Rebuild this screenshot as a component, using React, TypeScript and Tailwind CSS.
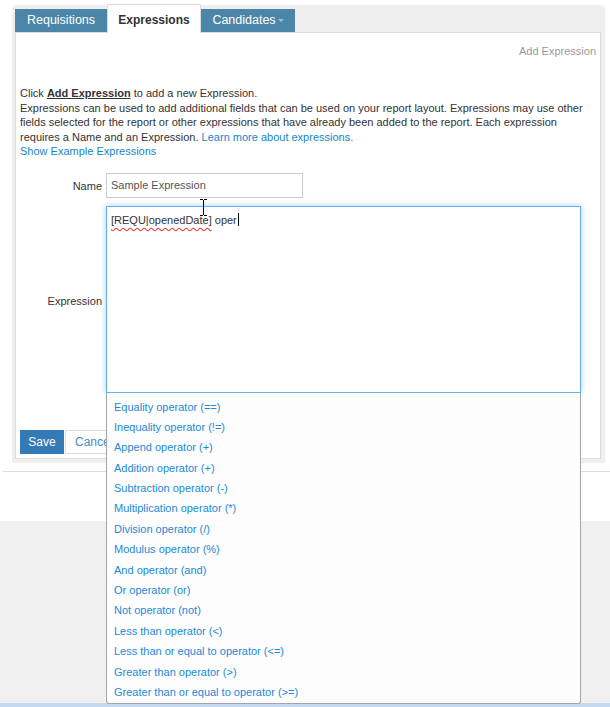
import React from "react";

const operators = [
  "Equality operator (==)",
  "Inequality operator (!=)",
  "Append operator (+)",
  "Addition operator (+)",
  "Subtraction operator (-)",
  "Multiplication operator (*)",
  "Division operator (/)",
  "Modulus operator (%)",
  "And operator (and)",
  "Or operator (or)",
  "Not operator (not)",
  "Less than operator (<)",
  "Less than or equal to operator (<=)",
  "Greater than operator (>)",
  "Greater than or equal to operator (>=)",
];

const Tab: React.FC<{ width: string; caret?: boolean; children: React.ReactNode }> = ({
  width,
  caret,
  children,
}) => (
  <div
    className={`flex h-[23px] ${width} items-center justify-center bg-[#4b86a8] text-[12.5px] text-white`}
  >
    {children}
    {caret && (
      <span className="ml-[2px] inline-block h-0 w-0 border-x-[3px] border-t-[3px] border-x-transparent border-t-[#9fc2d8]" />
    )}
  </div>
);

export default function App() {
  return (
    <div className="relative h-[707px] w-[610px] overflow-hidden bg-white font-['Liberation_Sans',Arial,sans-serif] text-[11px] text-[#333]">
      <div className="ml-[12px] mt-[5px] w-[592px] rounded-t-[4px] bg-[#efefef] px-[3px] pb-[3px] shadow-[1px_1px_2px_rgba(0,0,0,0.08)]">
        {/* tabs */}
        <div className="flex h-[27px] items-end">
          <Tab width="w-[92px]">Requisitions</Tab>
          <div className="relative z-10 -mb-px flex h-[29px] w-[94px] items-center justify-center border border-b-0 border-[#ddd] bg-white pt-[2px] text-[12px] font-bold text-[#333]">
            Expressions
          </div>
          <Tab width="w-[94px]" caret>
            Candidates
          </Tab>
        </div>

        {/* content */}
        <div className="border border-[#ddd] bg-white px-[4px] pb-[4px] pt-[11px]">
          <div className="text-right leading-[15px] text-[#999]">Add Expression</div>

          <p className="mt-[27px] leading-[14.5px]">
            Click <b className="underline">Add Expression</b> to add a new Expression.
            <br />
            Expressions can be used to add additional fields that can be used on your report layout.
            Expressions may use other fields selected for the report or other expressions that have
            already been added to the report. Each expression requires a Name and an Expression.{" "}
            <span className="text-[#1585cf]">Learn more about expressions.</span>
            <br />
            <span className="text-[#1585cf]">Show Example Expressions</span>
          </p>

          {/* name */}
          <div className="mt-[14px] flex items-center gap-[4px]">
            <div className="w-[82px] pt-[2px] text-right">Name</div>
            <div className="flex h-[25px] w-[197px] items-center border border-[#ccc] px-[4px] pt-px text-[#555]">
              Sample Expression
            </div>
          </div>

          {/* expression */}
          <div className="mt-[8px] flex items-center gap-[4px]">
            <div className="w-[82px] pt-[4px] text-right">Expression</div>
            <div className="relative w-[475px]">
              <div className="h-[187px] border border-[#66afe9] px-[4px] pt-[4px] leading-[15px] text-[#333] shadow-[0_0_6px_rgba(102,175,233,0.6)]">
                <span className="underline decoration-[#e53935] decoration-wavy underline-offset-[3px]">
                  [REQU|openedDate]
                </span>{" "}
                oper
                <span className="ml-px inline-block h-[13px] w-px translate-y-[2px] bg-black" />
              </div>
              <div className="absolute left-0 top-full z-20 w-full rounded-b-[3px] border border-t-0 border-[#a5a5a5] bg-[#fdfdfd] pb-px pt-[4px]">
                {operators.map((op) => (
                  <div key={op} className="h-[20.4px] pl-[7px] leading-[20.4px] text-[#1c8ad6]">
                    {op}
                  </div>
                ))}
              </div>
            </div>
          </div>

          {/* buttons */}
          <div className="mt-[37px] flex text-[12px]">
            <div className="flex h-[24px] w-[44px] items-center justify-center bg-[#337ab7] text-white">
              Save
            </div>
            <div className="ml-px flex h-[24px] items-center border border-[#ddd] bg-white px-[9px] text-[#428bca]">
              Cancel
            </div>
          </div>
        </div>
      </div>

      <div className="ml-[3px] mt-[9px] h-px bg-[#ddd]" />
      <div className="mt-[49px] h-[182px] bg-[#f0f0f0]" />
      <div className="h-[4px] bg-[#c3d9ef]" />

      {/* mouse i-beam */}
      <svg
        className="absolute left-[199px] top-[199px] z-30"
        width="9"
        height="17"
        viewBox="0 0 9 17"
        fill="none"
        stroke="#000"
        strokeWidth="1"
      >
        <path d="M1 0.5h3M5 0.5h3M4.5 1v15M1 16.5h3M5 16.5h3" />
      </svg>
    </div>
  );
}
